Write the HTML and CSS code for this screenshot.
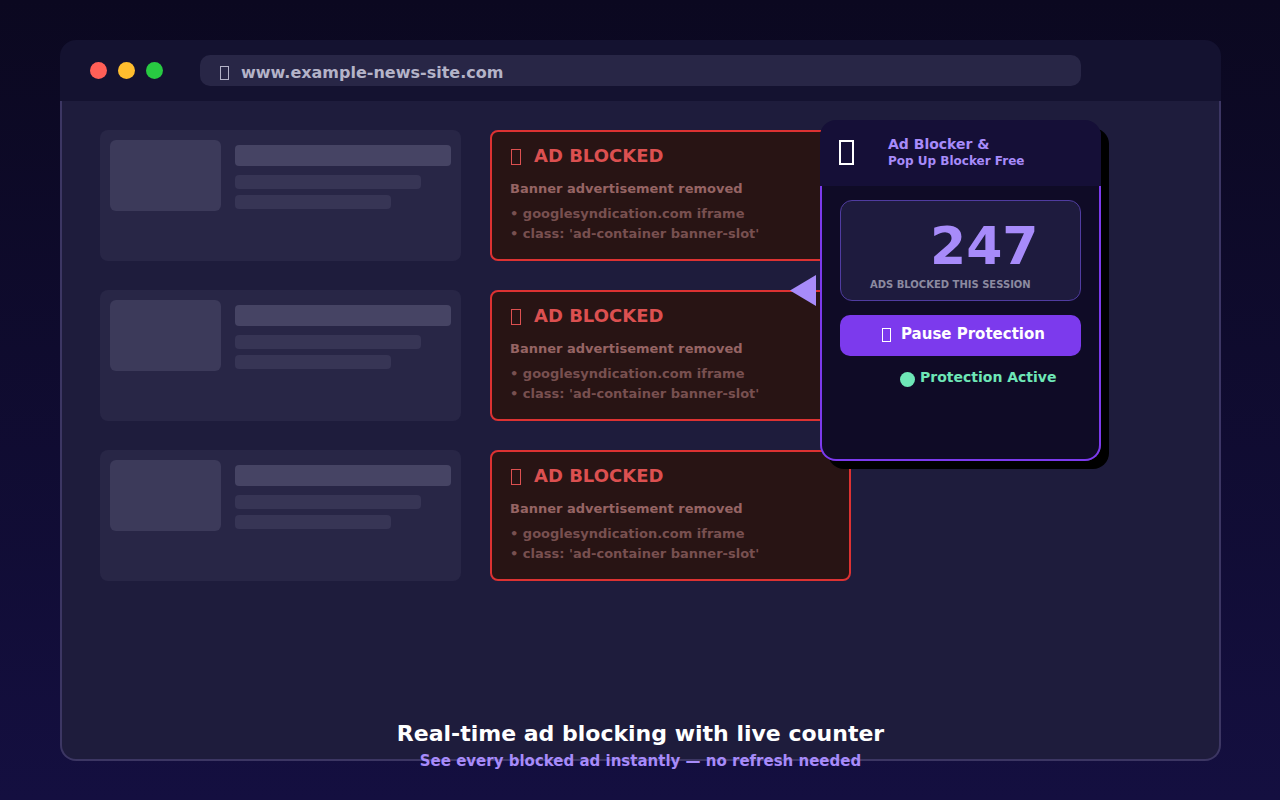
FILE: index.html
```html
<!DOCTYPE html>
<html lang="en">
<head>
    <meta charset="UTF-8">
    <meta name="viewport" content="width=device-width, initial-scale=1.0">
    <title>Ad Blocker &amp; Pop Up Blocker Free</title>
    <link rel="stylesheet" href="styles.css">
</head>
<body>
    <main class="browser">
        <div class="toolbar">
            <div class="lights">
                <span class="light red"></span>
                <span class="light yellow"></span>
                <span class="light green"></span>
            </div>
            <div class="address">
                <span class="glyph glyph-md"></span>
                <input type="text" class="url" aria-label="Address" value="www.example-news-site.com">
            </div>
        </div>

        <div class="page">
            <article class="story">
                <div class="thumb"></div>
                <div class="lines">
                    <div class="line headline"></div>
                    <div class="line long"></div>
                    <div class="line short"></div>
                </div>
            </article>
            <section class="blocked">
                <h2><span class="glyph glyph-lg"></span>AD BLOCKED</h2>
                <p>Banner advertisement removed</p>
                <ul>
                    <li>• googlesyndication.com iframe</li>
                    <li>• class: 'ad-container banner-slot'</li>
                </ul>
            </section>

            <article class="story">
                <div class="thumb"></div>
                <div class="lines">
                    <div class="line headline"></div>
                    <div class="line long"></div>
                    <div class="line short"></div>
                </div>
            </article>
            <section class="blocked">
                <h2><span class="glyph glyph-lg"></span>AD BLOCKED</h2>
                <p>Banner advertisement removed</p>
                <ul>
                    <li>• googlesyndication.com iframe</li>
                    <li>• class: 'ad-container banner-slot'</li>
                </ul>
            </section>

            <article class="story">
                <div class="thumb"></div>
                <div class="lines">
                    <div class="line headline"></div>
                    <div class="line long"></div>
                    <div class="line short"></div>
                </div>
            </article>
            <section class="blocked">
                <h2><span class="glyph glyph-lg"></span>AD BLOCKED</h2>
                <p>Banner advertisement removed</p>
                <ul>
                    <li>• googlesyndication.com iframe</li>
                    <li>• class: 'ad-container banner-slot'</li>
                </ul>
            </section>
        </div>

        <aside class="popup">
            <header class="popup-header">
                <span class="glyph glyph-xl"></span>
                <h1>Ad Blocker &amp;<small>Pop Up Blocker Free</small></h1>
            </header>
            <div class="popup-body">
                <div class="counter">
                    <div class="count">247</div>
                    <div class="count-label">ADS BLOCKED THIS SESSION</div>
                </div>
                <button type="button" class="pause"><span class="glyph glyph-sm"></span>Pause Protection</button>
                <div class="status"><span class="dot"></span>Protection Active</div>
            </div>
            <span class="pointer"></span>
        </aside>

        <div class="caption">
            <h2>Real-time ad blocking with live counter</h2>
            <p>See every blocked ad instantly — no refresh needed</p>
        </div>
    </main>
</body>
</html>
```

FILE: styles.css
```css
* {
    box-sizing: border-box;
}

body {
    display: flex;
    min-height: 100vh;
    margin: 0;
    padding: 40px 59px 39px 60px;
    background: linear-gradient(#0b0820, #140f40);
    font-family: "DejaVu Sans", sans-serif;
    font-weight: 700;
}

h1, h2, p, ul {
    margin: 0;
    padding: 0;
    font-weight: 700;
    list-style: none;
}

/* Browser window */
.browser {
    position: relative;
    display: flex;
    flex: 1;
    flex-direction: column;
}

.toolbar {
    display: flex;
    align-items: center;
    gap: 37px;
    height: 61px;
    padding: 0 140px 0 30px;
    border-radius: 16px 16px 0 0;
    background-color: #141230;
}

.lights {
    display: flex;
    gap: 11px;
}

.light {
    width: 17px;
    height: 17px;
    border-radius: 50%;
}

.red { background-color: #ff5f57; }
.yellow { background-color: #ffbd2e; }
.green { background-color: #28ca42; }

.address {
    display: flex;
    flex: 1;
    align-items: center;
    height: 31px;
    padding: 3px 20px 0;
    border-radius: 10px;
    background-color: #282646;
    color: #b4b3c8;
}

.url {
    flex: 1;
    min-width: 0;
    padding: 0;
    border: 0;
    outline: 0;
    background: none;
    color: inherit;
    font: inherit;
    font-size: 16px;
}

.page {
    display: grid;
    flex: 1;
    grid-template-columns: repeat(2, minmax(0, 361px));
    align-content: start;
    gap: 29px;
    padding: 29px 38px;
    border: 2px solid #3c3663;
    border-top: 0;
    border-radius: 0 0 16px 16px;
    background-color: #1e1c3c;
}

/* Empty box icons */
.glyph {
    flex: none;
    display: inline-block;
    border: 1px solid currentColor;
}

.glyph-sm { width: 9px; height: 14px; margin: 2px 10px 0 0; }
.glyph-md { width: 9px; height: 14px; margin: 2px 12px 0 0; }
.glyph-lg { width: 10px; height: 16px; margin: 2px 13px 0 0; }
.glyph-xl { width: 15px; height: 25px; border-width: 2px; color: #ffffff; }

/* Page content */
.story {
    display: flex;
    gap: 14px;
    min-height: 131px;
    padding: 10px;
    border-radius: 8px;
    background-color: #282646;
}

.thumb {
    flex: none;
    width: 111px;
    height: 71px;
    border-radius: 6px;
    background-color: #3c3a5a;
}

.lines {
    flex: 1;
    padding-top: 5px;
}

.line {
    height: 14px;
    margin-bottom: 6px;
    border-radius: 4px;
    background-color: #373555;
}

.line.headline {
    height: 21px;
    margin-bottom: 9px;
    background-color: #464464;
}

.line.long { width: 86%; }
.line.short { width: 72%; }

.blocked {
    min-height: 131px;
    padding: 12px 18px;
    border: 2px solid #dc3232;
    border-radius: 8px;
    background-color: #281414;
}

.blocked h2 {
    display: flex;
    align-items: center;
    margin-bottom: 11px;
    padding-left: 1px;
    color: #dc5050;
    font-size: 18px;
    line-height: 24px;
}

.blocked p {
    margin-bottom: 5px;
    color: #966464;
    font-size: 13px;
    line-height: 20px;
}

.blocked li {
    color: #785050;
    font-size: 13px;
    line-height: 20px;
}

/* Extension popup */
.popup {
    position: absolute;
    top: 80px;
    right: 120px;
    display: flex;
    flex-direction: column;
    width: 281px;
    min-height: 341px;
    border-radius: 16px;
    box-shadow: 8px 8px 0 #000000;
}

.popup-header {
    display: flex;
    align-items: center;
    gap: 34px;
    height: 66px;
    padding: 0 19px 2px;
    border-radius: 16px 16px 0 0;
    background-color: #150f37;
    color: #a78bfa;
}

.popup-header h1 {
    font-size: 14px;
    line-height: 18px;
}

.popup-header small {
    display: block;
    font-size: 12px;
    line-height: 16px;
}

.popup-body {
    flex: 1;
    padding: 14px 18px;
    border: 2px solid #7c3aed;
    border-top: 0;
    border-radius: 0 0 16px 16px;
    background-color: #0f0b26;
}

.counter {
    height: 101px;
    padding: 15px 29px 13px;
    border: 1px solid #503ca0;
    border-radius: 12px;
    background-color: #1e1b3e;
}

.count {
    padding-left: 60px;
    color: #a78bfa;
    font-size: 52px;
    line-height: 60px;
}

.count-label {
    color: #8c8aa0;
    font-size: 10px;
    line-height: 18px;
    white-space: nowrap;
}

.pause {
    display: flex;
    align-items: center;
    justify-content: center;
    width: 100%;
    height: 41px;
    margin: 14px 0 13px;
    padding: 0 0 4px 6px;
    border: 0;
    border-radius: 10px;
    background-color: #7c3aed;
    color: #ffffff;
    font: inherit;
    font-size: 15px;
    cursor: pointer;
}

.status {
    display: flex;
    gap: 5px;
    padding-left: 60px;
    color: #6ee7b7;
    font-size: 14px;
    line-height: 16px;
}

.dot {
    width: 15px;
    height: 15px;
    margin-top: 3px;
    border-radius: 50%;
    background-color: #6ee7b7;
}

.pointer {
    position: absolute;
    top: 155px;
    left: -30px;
    width: 26px;
    height: 31px;
    background-color: #a78bfa;
    clip-path: polygon(0 50%, 100% 0, 100% 100%);
}

/* Caption laid over the bottom edge of the window */
.caption {
    position: absolute;
    right: 0;
    bottom: -11px;
    left: 0;
    text-align: center;
}

.caption h2 {
    color: #ffffff;
    font-size: 22px;
    line-height: 32px;
}

.caption p {
    color: #a78bfa;
    font-size: 15px;
    line-height: 22px;
}
```
